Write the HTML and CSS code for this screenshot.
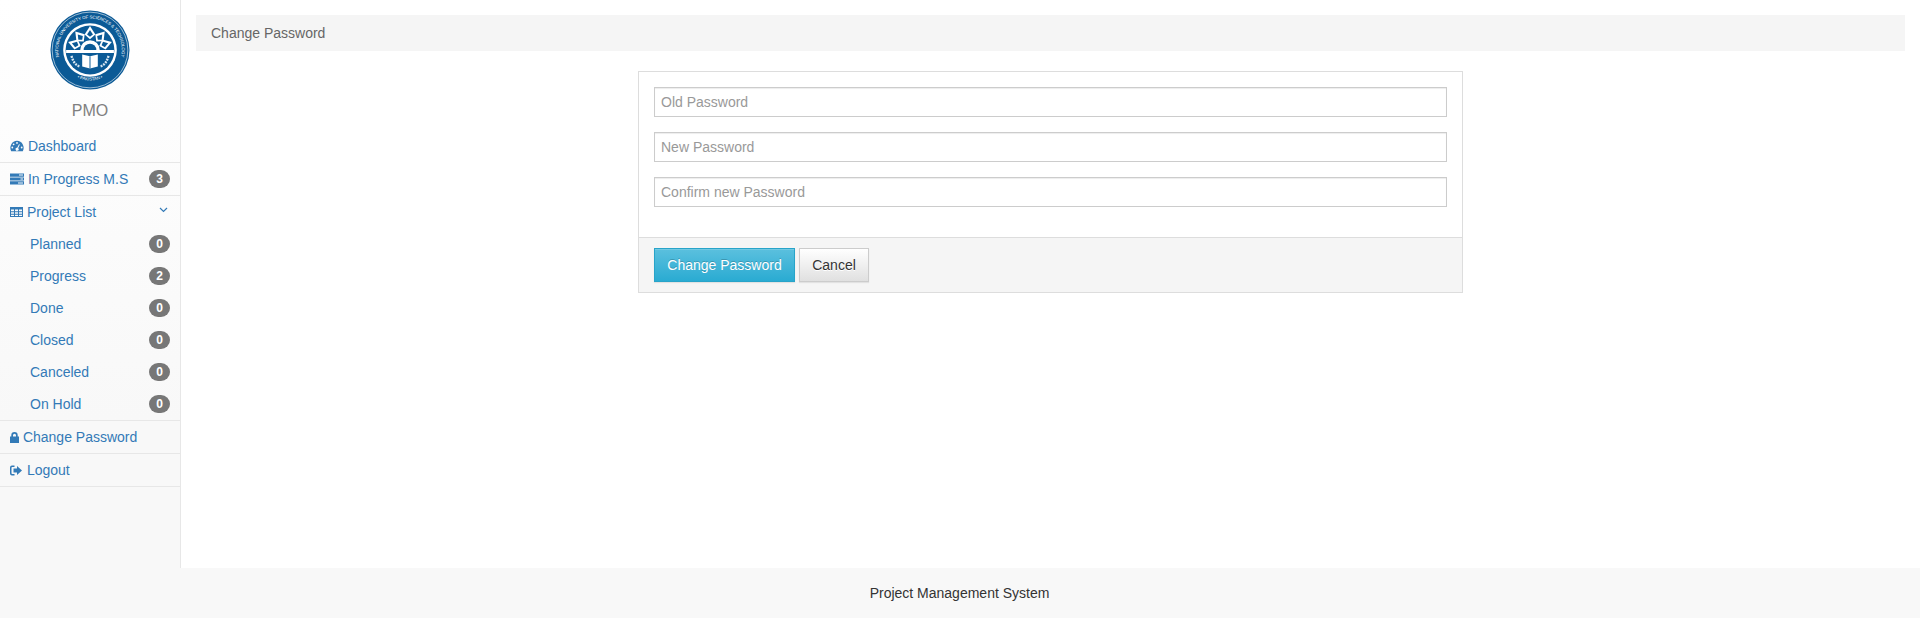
FILE: index.html
```html
<!DOCTYPE html>
<html lang="en">
<head>
    <meta charset="UTF-8">
    <title>Change Password</title>
    <link rel="stylesheet" href="styles.css">
</head>
<body>
    <div class="wrapper">
        <aside class="sidebar">
            <div class="profile">
                <svg class="logo" width="80" height="80" viewBox="0 0 82 82">
                    <defs>
                        <path id="arc-top" d="M11 54 A32.6 32.6 0 1 1 71 54"/>
                        <path id="arc-bottom" d="M16 60 A31.5 31.5 0 0 0 66 60"/>
                        <g id="ray">
                            <path d="M41 16.5 L46.5 25 L41 30 L35.5 25 Z" fill="#fff"/>
                            <path d="M41 20.5 L44 25 L41 27.5 L38 25 Z" fill="#0b5a96"/>
                        </g>
                    </defs>
                    <circle cx="41" cy="41" r="40.5" fill="#0b5a96"/>
                    <circle cx="41" cy="41" r="38.8" fill="none" stroke="#fff" stroke-width="0.6"/>
                    <circle cx="41" cy="41" r="27.5" fill="#fff"/>
                    <circle cx="41" cy="41" r="25" fill="#0b5a96"/>
                    <text class="logo-text"><textPath href="#arc-top" startOffset="50%" text-anchor="middle">NATIONAL UNIVERSITY OF SCIENCES &amp; TECHNOLOGY</textPath></text>
                    <text class="logo-text"><textPath href="#arc-bottom" startOffset="50%" text-anchor="middle">• PAKISTAN •</textPath></text>
                    <use href="#ray"/>
                    <use href="#ray" transform="rotate(-40 41 40)"/>
                    <use href="#ray" transform="rotate(40 41 40)"/>
                    <use href="#ray" transform="rotate(-72 41 40)"/>
                    <use href="#ray" transform="rotate(72 41 40)"/>
                    <path d="M16.5 41 H65.5 V44 H16.5 Z" fill="#fff"/>
                    <path d="M31 41 A10 10 0 0 1 51 41 Z" fill="#fff"/>
                    <path d="M34.5 41 A6.5 6.5 0 0 1 47.5 41 Z" fill="#0b5a96"/>
                    <path d="M33 45.5 L41 47.5 L49 45.5 V58 L41 60 L33 58 Z" fill="#fff"/>
                    <path d="M41 47.5 V60" stroke="#0b5a96" stroke-width="1"/>
                    <path d="M22 47 C24 54 27 57 31 58 M60 47 C58 54 55 57 51 58" fill="none" stroke="#d5e4ef" stroke-width="2.4" stroke-dasharray="2 1"/>
                </svg>
                <div class="profile-name">PMO</div>
            </div>
            <ul class="nav">
                <li class="nav-item">
                    <a href="#">
                        <svg class="icon" width="14" height="12" viewBox="0 0 14 12"><path fill-rule="evenodd" d="M7 0.8 A7 7 0 0 0 1.2 11.2 H12.8 A7 7 0 0 0 7 0.8 Z M7 2 a0.9 0.9 0 1 1 0 1.8 a0.9 0.9 0 0 1 0 -1.8 Z M3.6 3.4 a0.9 0.9 0 1 1 0 1.8 a0.9 0.9 0 0 1 0 -1.8 Z M2.3 6.6 a0.9 0.9 0 1 1 0 1.8 a0.9 0.9 0 0 1 0 -1.8 Z M11.7 6.6 a0.9 0.9 0 1 1 0 1.8 a0.9 0.9 0 0 1 0 -1.8 Z M9 4.2 L9.9 4.6 L8.1 8.2 a1.5 1.5 0 1 1 -0.9 -0.4 Z"/></svg>
                        Dashboard
                    </a>
                </li>
                <li class="nav-item">
                    <a href="#">
                        <svg class="icon" width="14" height="12" viewBox="0 0 14 12"><path fill-rule="evenodd" d="M0 0.5 H14 V3.7 H0 Z M9 1.6 V2.6 H13 V1.6 Z M0 4.4 H14 V7.6 H0 Z M10.5 5.5 V6.5 H13 V5.5 Z M0 8.3 H14 V11.5 H0 Z M8 9.4 V10.4 H13 V9.4 Z"/></svg>
                        In Progress M.S
                    </a>
                    <span class="badge">3</span>
                </li>
                <li class="nav-item nav-group">
                    <a href="#">
                        <svg class="icon" width="13" height="12" viewBox="0 0 13 12"><path fill-rule="evenodd" d="M0 1 H13 V11 H0 Z M1 3.6 V5.3 H4 V3.6 Z M5 3.6 V5.3 H8 V3.6 Z M9 3.6 V5.3 H12 V3.6 Z M1 6.2 V7.8 H4 V6.2 Z M5 6.2 V7.8 H8 V6.2 Z M9 6.2 V7.8 H12 V6.2 Z M1 8.7 V10.1 H4 V8.7 Z M5 8.7 V10.1 H8 V8.7 Z M9 8.7 V10.1 H12 V8.7 Z"/></svg>
                        Project List
                    </a>
                    <svg class="chevron" width="9" height="6" viewBox="0 0 9 6"><path d="M1 1 L4.5 4.5 L8 1" fill="none" stroke="#337ab7" stroke-width="1.2"/></svg>
                </li>
                <li class="nav-sub">
                    <ul>
                        <li><a href="#">Planned</a><span class="badge">0</span></li>
                        <li><a href="#">Progress</a><span class="badge">2</span></li>
                        <li><a href="#">Done</a><span class="badge">0</span></li>
                        <li><a href="#">Closed</a><span class="badge">0</span></li>
                        <li><a href="#">Canceled</a><span class="badge">0</span></li>
                        <li><a href="#">On Hold</a><span class="badge">0</span></li>
                    </ul>
                </li>
                <li class="nav-item">
                    <a href="#">
                        <svg class="icon" width="9" height="11" viewBox="0 0 9 11"><path fill-rule="evenodd" d="M0 4.5 H1.3 V3.2 A3.2 3.2 0 0 1 7.7 3.2 V4.5 H9 V11 H0 Z M3 4.5 H6 V3.2 A1.5 1.5 0 0 0 3 3.2 Z"/></svg>
                        Change Password
                    </a>
                </li>
                <li class="nav-item">
                    <a href="#">
                        <svg class="icon" width="13" height="11" viewBox="0 0 13 11"><path d="M4.5 0.5 H2 A2 2 0 0 0 0 2.5 V8.5 A2 2 0 0 0 2 10.5 H4.5 V9 H2.2 A0.7 0.7 0 0 1 1.5 8.3 V2.7 A0.7 0.7 0 0 1 2.2 2 H4.5 Z M7 1 L12 5.5 L7 10 V7.4 H3.5 V3.6 H7 Z"/></svg>
                        Logout
                    </a>
                </li>
            </ul>
        </aside>
        <main class="content">
            <div class="page-title">Change Password</div>
            <form class="panel">
                <div class="panel-body">
                    <input class="field" type="password" placeholder="Old Password">
                    <input class="field" type="password" placeholder="New Password">
                    <input class="field" type="password" placeholder="Confirm new Password">
                </div>
                <div class="panel-footer">
                    <button class="btn btn-primary" type="submit">Change Password</button>
                    <button class="btn btn-default" type="button">Cancel</button>
                </div>
            </form>
        </main>
    </div>
    <footer class="site-footer">Project Management System</footer>
</body>
</html>
```

FILE: styles.css
```css
* {
    box-sizing: border-box;
}

body {
    margin: 0;
    height: 618px;
    display: flex;
    flex-direction: column;
    font-family: "Liberation Sans", Arial, sans-serif;
    font-size: 14px;
    color: #333333;
    background-color: #FFFFFF;
}

a {
    color: #337AB7;
    text-decoration: none;
}

ul {
    list-style: none;
    margin: 0;
    padding: 0;
}

.wrapper {
    flex: 1;
    display: flex;
    min-height: 0;
}

/* Sidebar */
.sidebar {
    width: 181px;
    flex-shrink: 0;
    background: linear-gradient(to bottom, #FFFFFF 0, #F8F8F8 420px);
    border-right: 1px solid #E7E7E7;
}

.profile {
    height: 130px;
    padding-top: 10px;
    text-align: center;
}

.logo {
    display: block;
    margin: 0 auto;
}

.logo-text {
    font-family: "Liberation Sans", Arial, sans-serif;
    font-size: 4.4px;
    fill: #FFFFFF;
}

.profile-name {
    margin-top: 11px;
    font-size: 16px;
    line-height: 20px;
    color: #808080;
}

.nav-item {
    display: flex;
    align-items: center;
    justify-content: space-between;
    height: 33px;
    padding: 0 10px;
    border-bottom: 1px solid #E7E7E7;
}

.nav-group {
    height: 32px;
    border-bottom: none;
    align-items: flex-start;
    padding-top: 8px;
}

.icon {
    fill: #337AB7;
    vertical-align: -1px;
}

.chevron {
    margin: 3px 2px 0 0;
}

.nav-sub {
    border-bottom: 1px solid #E7E7E7;
}

.nav-sub li {
    display: flex;
    align-items: center;
    justify-content: space-between;
    height: 32px;
    padding: 0 10px 0 30px;
}

.badge {
    min-width: 21px;
    height: 18px;
    margin-bottom: 1px;
    padding: 2px 7px;
    border-radius: 9px;
    font-size: 12px;
    font-weight: bold;
    line-height: 14px;
    text-align: center;
    color: #FFFFFF;
    background-color: #777777;
}

/* Main */
.content {
    flex: 1;
    padding: 15px 15px 0;
}

.page-title {
    height: 36px;
    padding: 0 15px;
    line-height: 36px;
    color: #666666;
    background-color: #F5F5F5;
}

.panel {
    width: 825px;
    margin: 20px auto 0;
    border: 1px solid #DDDDDD;
}

.panel-body {
    display: flex;
    flex-direction: column;
    gap: 15px;
    height: 165px;
    padding: 15px;
}

.field {
    height: 30px;
    padding: 0 6px;
    font-family: inherit;
    font-size: 14px;
    border: 1px solid #CCCCCC;
    box-shadow: inset 0 1px 1px rgba(0, 0, 0, 0.075);
}

.field::placeholder {
    color: #999999;
    opacity: 1;
}

.panel-footer {
    display: flex;
    gap: 4px;
    height: 55px;
    padding: 10px 15px;
    background-color: #F5F5F5;
    border-top: 1px solid #DDDDDD;
}

.btn {
    height: 34px;
    padding: 0;
    font-family: inherit;
    font-size: 14px;
    cursor: pointer;
    border: 1px solid transparent;
    box-shadow: inset 0 1px 0 rgba(255, 255, 255, 0.15), 0 1px 1px rgba(0, 0, 0, 0.075);
}

.btn-primary {
    width: 141px;
    color: #FFFFFF;
    text-shadow: 0 -1px 0 rgba(0, 0, 0, 0.2);
    background: linear-gradient(to bottom, #5BC0DE 0, #2AABD2 100%);
    border-color: #28A4C9;
}

.btn-default {
    width: 70px;
    color: #333333;
    text-shadow: 0 1px 0 #FFFFFF;
    background: linear-gradient(to bottom, #FFFFFF 0, #E0E0E0 100%);
    border-color: #CCCCCC;
}

.site-footer {
    height: 50px;
    flex-shrink: 0;
    padding-right: 1px;
    line-height: 50px;
    text-align: center;
    background-color: #F8F8F8;
}
```
